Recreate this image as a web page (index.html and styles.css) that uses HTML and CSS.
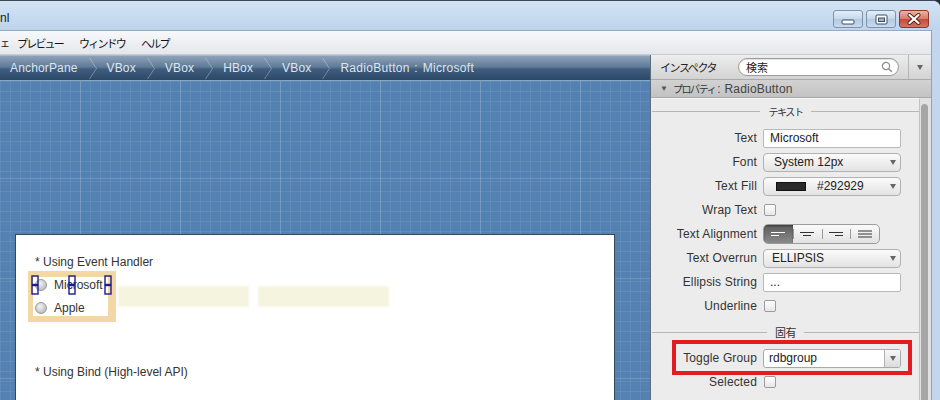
FILE: index.html
```html
<!DOCTYPE html>
<html lang="ja">
<head>
<meta charset="utf-8">
<title>Scene Builder</title>
<link rel="stylesheet" href="styles.css">
</head>
<body>
<div class="window">
  <div class="titlebar">
    <span class="title">nl</span>
    <div class="winbtns">
      <div class="wb">
        <svg width="14" height="6" viewBox="0 0 14 6"><rect x="1" y="1" width="12" height="4" rx="1" fill="#fff" stroke="#3c4c63"/></svg>
      </div>
      <div class="wb">
        <svg width="13" height="11" viewBox="0 0 13 11"><rect x="1" y="1" width="11" height="9" rx="1" fill="#fff" stroke="#3c4c63"/><rect x="3.5" y="4" width="6" height="3.5" fill="#9fb3cb" stroke="#3c4c63"/></svg>
      </div>
      <div class="wb close">
        <svg width="14" height="12" viewBox="0 0 14 12"><path d="M2.5 2 L11.5 10 M11.5 2 L2.5 10" stroke="#5a2018" stroke-width="4" stroke-linecap="round"/><path d="M2.5 2 L11.5 10 M11.5 2 L2.5 10" stroke="#fff" stroke-width="2.2" stroke-linecap="round"/></svg>
      </div>
    </div>
  </div>

  <div class="frame">
    <div class="menubar">
      <span class="menu jp frag">ェ</span>
      <span class="menu jp">プレビュー</span>
      <span class="menu jp">ウィンドウ</span>
      <span class="menu jp">ヘルプ</span>
    </div>

    <div class="main">
      <div class="left">
        <div class="crumbs">
          <span class="crumb">AnchorPane</span>
          <svg class="chev" width="8" height="25" viewBox="0 0 8 25"><polyline points="0.5,2 7.5,12.5 0.5,23" fill="none" stroke="rgba(255,255,255,0.3)"/></svg>
          <span class="crumb">VBox</span>
          <svg class="chev" width="8" height="25" viewBox="0 0 8 25"><polyline points="0.5,2 7.5,12.5 0.5,23" fill="none" stroke="rgba(255,255,255,0.3)"/></svg>
          <span class="crumb">VBox</span>
          <svg class="chev" width="8" height="25" viewBox="0 0 8 25"><polyline points="0.5,2 7.5,12.5 0.5,23" fill="none" stroke="rgba(255,255,255,0.3)"/></svg>
          <span class="crumb">HBox</span>
          <svg class="chev" width="8" height="25" viewBox="0 0 8 25"><polyline points="0.5,2 7.5,12.5 0.5,23" fill="none" stroke="rgba(255,255,255,0.3)"/></svg>
          <span class="crumb">VBox</span>
          <svg class="chev" width="8" height="25" viewBox="0 0 8 25"><polyline points="0.5,2 7.5,12.5 0.5,23" fill="none" stroke="rgba(255,255,255,0.3)"/></svg>
          <span class="crumb last">RadioButton : Microsoft</span>
        </div>
        <div class="canvas">
          <div class="doc">
            <div class="doctext first">* Using Event Handler</div>
            <div class="hbox">
              <div class="selbox">
                <div class="vbox">
                  <div class="radio"><span class="dot"></span><span>Microsoft</span></div>
                  <div class="radio"><span class="dot"></span><span>Apple</span></div>
                </div>
                <svg class="handle h1" width="8" height="20" viewBox="0 0 8 20"><rect x="1" y="1" width="6" height="8.5" fill="none" stroke="#1c1c8e" stroke-width="1.4"/><rect x="1" y="10.5" width="6" height="8.5" fill="none" stroke="#1c1c8e" stroke-width="1.4"/></svg>
                <svg class="handle h2" width="8" height="20" viewBox="0 0 8 20"><rect x="1" y="1" width="6" height="8.5" fill="none" stroke="#1c1c8e" stroke-width="1.4"/><rect x="1" y="10.5" width="6" height="8.5" fill="none" stroke="#1c1c8e" stroke-width="1.4"/></svg>
                <svg class="handle h3" width="8" height="20" viewBox="0 0 8 20"><rect x="1" y="1" width="6" height="8.5" fill="none" stroke="#1c1c8e" stroke-width="1.4"/><rect x="1" y="10.5" width="6" height="8.5" fill="none" stroke="#1c1c8e" stroke-width="1.4"/></svg>
              </div>
              <div class="ybox"></div>
              <div class="ybox second"></div>
            </div>
            <div class="doctext">* Using Bind (High-level API)</div>
          </div>
        </div>
      </div>

      <div class="inspector">
        <div class="ihead">
          <span class="ititle jp">インスペクタ</span>
          <div class="search">
            <span class="jp stext">検索</span>
            <svg width="12" height="12" viewBox="0 0 12 12"><circle cx="5" cy="5" r="3.6" fill="none" stroke="#8a8a8a" stroke-width="1.2"/><line x1="7.7" y1="7.7" x2="10.8" y2="10.8" stroke="#8a8a8a" stroke-width="1.5"/></svg>
          </div>
          <div class="imenu"><i class="tri"></i></div>
        </div>
        <div class="iprops"><span class="small-tri">▼</span><span class="jp ptitle">プロパティ</span><span class="psub"> : RadioButton</span></div>
        <div class="sheetwrap">
          <div class="sheet">
            <div class="sec sec1"><span class="jp sectext">テキスト</span></div>
            <div class="row"><div class="lbl">Text</div><div class="field">Microsoft</div></div>
            <div class="row"><div class="lbl">Font</div><div class="sel"><span class="selval">System 12px</span><i class="tri"></i></div></div>
            <div class="row"><div class="lbl">Text Fill</div><div class="sel"><span class="swatch"></span><span class="fillval">#292929</span><i class="tri"></i></div></div>
            <div class="row"><div class="lbl">Wrap Text</div><span class="check"></span></div>
            <div class="row"><div class="lbl">Text Alignment</div>
              <div class="seg">
                <span class="sb on"><svg width="16" height="8" viewBox="0 0 16 8"><line x1="1" y1="2.5" x2="15" y2="2.5" stroke="#fff" stroke-width="1.2"/><line x1="1" y1="5.5" x2="9" y2="5.5" stroke="#fff" stroke-width="1.2"/></svg></span>
                <span class="sb"><svg width="16" height="8" viewBox="0 0 16 8"><line x1="1" y1="2.5" x2="15" y2="2.5" stroke="#333" stroke-width="1.2"/><line x1="4" y1="5.5" x2="12" y2="5.5" stroke="#333" stroke-width="1.2"/></svg></span>
                <span class="sb"><svg width="16" height="8" viewBox="0 0 16 8"><line x1="1" y1="2.5" x2="15" y2="2.5" stroke="#333" stroke-width="1.2"/><line x1="7" y1="5.5" x2="15" y2="5.5" stroke="#333" stroke-width="1.2"/></svg></span>
                <span class="sb"><svg width="16" height="8" viewBox="0 0 16 8"><line x1="1" y1="1" x2="15" y2="1" stroke="#333" stroke-width="1.2"/><line x1="1" y1="4" x2="15" y2="4" stroke="#333" stroke-width="1.2"/><line x1="1" y1="7" x2="15" y2="7" stroke="#333" stroke-width="1.2"/></svg></span>
              </div>
            </div>
            <div class="row"><div class="lbl">Text Overrun</div><div class="sel"><span class="selval ov">ELLIPSIS</span><i class="tri"></i></div></div>
            <div class="row"><div class="lbl">Ellipsis String</div><div class="field">...</div></div>
            <div class="row"><div class="lbl">Underline</div><span class="check"></span></div>
            <div class="sec sec2"><span class="jp sectext kanji">固有</span></div>
            <div class="row rel"><div class="lbl">Toggle Group</div>
              <div class="combo"><span class="comboval">rdbgroup</span><span class="cbtn"><i class="tri"></i></span></div>
              <div class="redbox"></div>
            </div>
            <div class="row"><div class="lbl">Selected</div><span class="check"></span></div>
          </div>
          <div class="vscroll"><div class="thumb"></div></div>
        </div>
      </div>
    </div>
  </div>
</div>
</body>
</html>
```

FILE: styles.css
```css
* { box-sizing: border-box; margin: 0; padding: 0; }
html, body { width: 940px; height: 400px; overflow: hidden; }
body {
  background: #26313d;
  font-family: "Liberation Sans", "Noto Sans CJK JP", sans-serif;
  font-size: 12px;
  color: #333;
}
.jp { font-family: "Noto Sans CJK JP", sans-serif; }

.window {
  width: 940px;
  height: 400px;
  display: flex;
  flex-direction: column;
  background: #c2d7ed;
  border-top: 1px solid #3b4a5a;
  border-top-right-radius: 7px;
  overflow: hidden;
}

/* title bar */
.titlebar {
  height: 29px;
  flex: none;
  display: flex;
  justify-content: space-between;
  align-items: flex-start;
  background: linear-gradient(#d3e3f4, #bed4ec);
  padding-right: 11px;
}
.title { font-size: 12px; color: #1a1a1a; line-height: 14px; margin-top: 10px; }
.winbtns { display: flex; gap: 3px; margin-top: 9px; }
.wb {
  width: 30px; height: 18px;
  border: 1px solid #7c93ad;
  border-radius: 3px;
  background: linear-gradient(#e4eef9, #c6d7ea 50%, #b4c9e0 51%, #c8daee);
  display: flex; align-items: center; justify-content: center;
}
.wb:first-child svg { margin-top: 6px; }
.wb.close {
  border-color: #8a3a2c;
  background: linear-gradient(#eab3a5, #d97866 50%, #c44a36 51%, #d5745e);
}

/* frame content */
.frame {
  flex: 1;
  margin-right: 8px;
  display: flex;
  flex-direction: column;
  border-right: 1px solid #8ca3bc;
  min-height: 0;
}
.menubar {
  height: 25px;
  flex: none;
  display: flex;
  align-items: center;
  background: linear-gradient(#f7f8fa, #e4e7eb);
  border-top: 1px solid #95abc3;
  border-bottom: 1px solid #c9cdd3;
  overflow: hidden;
}
.menu { font-size: 11px; letter-spacing: -1.8px; color: #111; margin-right: 16px; white-space: nowrap; }
.menu.frag { margin-right: 7px; font-size: 10px; letter-spacing: 0; }

.main { flex: 1; display: flex; min-height: 0; }
.left { width: 650px; flex: none; display: flex; flex-direction: column; }

/* breadcrumbs */
.crumbs {
  height: 25px;
  flex: none;
  display: flex;
  align-items: center;
  padding-left: 10px;
  background: linear-gradient(#8ea3b9 0%, #5f7b98 45%, #3f5d7e 55%, #2c4867 100%);
  border-top: 1px solid #a9b9c9;
  color: #dde5ee;
  white-space: nowrap;
  overflow: hidden;
}
.crumb { font-size: 12px; letter-spacing: 0.15px; }
.crumb.last { letter-spacing: 0.3px; word-spacing: 1px; }
.chev { margin: 0 10px 0 11px; flex: none; }

/* canvas */
.canvas {
  flex: 1;
  min-height: 0;
  overflow: hidden;
  padding: 153px 0 0 15px;
  border-top: 1px solid #86a6c8;
  background-color: #5381b1;
  background-image:
    linear-gradient(90deg, rgba(255,255,255,0.14) 1px, transparent 1px),
    linear-gradient(rgba(255,255,255,0.14) 1px, transparent 1px),
    linear-gradient(90deg, rgba(255,255,255,0.08) 1px, transparent 1px),
    linear-gradient(rgba(255,255,255,0.08) 1px, transparent 1px);
  background-size: 100px 100px, 100px 100px, 10px 10px, 10px 10px;
  background-position: 80px 0, 0 97px, 0 0, 0 0;
}
.doc {
  width: 600px;
  height: 200px;
  background: #fff;
  border: 1px solid #34465a;
  border-bottom: none;
}
.doctext { font-size: 12px; line-height: 14px; color: #333; margin-left: 19px; margin-top: 43px; }
.doctext.first { margin-top: 20px; }
.hbox { display: flex; align-items: flex-start; margin: 2px 0 0 12px; }
.selbox {
  position: relative;
  background: #f4d7a6;
  padding: 6px 8px 6px 5px;
}
.vbox {
  width: 75px;
  height: 39px;
  background: #fff;
  overflow: hidden;
  padding-left: 2px;
}
.radio { display: flex; align-items: center; height: 16px; gap: 7px; white-space: nowrap; font-size: 12px; color: #333; }
.radio + .radio { margin-top: 7px; }
.dot {
  width: 12px; height: 12px; border-radius: 50%; flex: none;
  background: radial-gradient(circle at 40% 35%, #f4f4f4, #c9c9c9 60%, #a9a9a9);
  border: 1px solid #9a9a9a;
}
.handle { position: absolute; top: 4px; }
.h1 { left: 3px; }
.h2 { left: 40px; }
.h3 { left: 76px; }
.ybox {
  width: 129px; height: 19px;
  margin: 16px 0 0 3px;
  background: #f4f4df;
  border-radius: 2px;
  box-shadow: 0 0 0 2px rgba(246,246,232,0.6);
}
.ybox.second { margin-left: 11px; }

/* inspector */
.inspector {
  flex: 1;
  display: flex;
  flex-direction: column;
  border-left: 1px solid #5d6d7e;
  background: #e9e9e9;
  min-width: 0;
}
.ihead {
  height: 25px;
  flex: none;
  display: flex;
  align-items: center;
  padding-left: 9px;
  background: linear-gradient(#ededed, #d3d3d3);
  border-bottom: 1px solid #aaaaaa;
}
.ititle { width: 78px; font-size: 11px; letter-spacing: -1.4px; color: #222; white-space: nowrap; }
.search {
  width: 161px; height: 18px;
  background: #fff;
  border: 1px solid #9b9b9b;
  border-radius: 9px;
  display: flex; align-items: center; justify-content: space-between;
  padding: 0 5px 0 7px;
  box-shadow: inset 0 1px 1px rgba(0,0,0,0.12);
}
.stext { font-size: 11px; color: #222; }
.imenu {
  margin-left: 9px;
  align-self: stretch;
  flex: 1;
  border-left: 1px solid #b5b5b5;
  display: flex; align-items: center; justify-content: center;
}
.tri {
  display: inline-block;
  width: 0; height: 0;
  border-left: 3.5px solid transparent;
  border-right: 3.5px solid transparent;
  border-top: 5px solid #666;
}
.iprops {
  height: 18px;
  flex: none;
  display: flex;
  align-items: center;
  padding-left: 9px;
  background: linear-gradient(#d2d2d2, #c3c3c3);
  border-bottom: 1px solid #a9a9a9;
  color: #444;
  white-space: nowrap;
}
.small-tri { font-size: 8px; color: #555; margin-right: 5px; }
.ptitle { font-size: 10px; letter-spacing: -1.4px; color: #333; }
.psub { font-size: 12px; color: #444; margin-left: 2px; letter-spacing: 0.2px; }

.sheetwrap { flex: 1; display: flex; min-height: 0; }
.sheet {
  width: 269px;
  flex: none;
  background: #ececec;
  border-right: 1px solid #c2c2c2;
  border-top: 1px solid #f6f6f6;
}
.sec {
  height: 24px;
  display: flex;
  align-items: center;
  gap: 8px;
  padding-left: 1px;
}
.sec::before, .sec::after { content: ""; flex: 1; height: 1px; background: #b6b6b6; }
.sec1 { margin-bottom: 3px; }
.sec2 { height: 28px; }
.sectext { font-size: 10px; letter-spacing: -1.4px; color: #333; }
.sectext.kanji { font-size: 11px; letter-spacing: -0.5px; }

.row { height: 24px; display: flex; align-items: center; }
.row.rel { position: relative; }
.lbl { width: 106px; text-align: right; margin-right: 6px; color: #333; white-space: nowrap; font-size: 12px; letter-spacing: 0.15px; }
.field {
  width: 138px; height: 19px;
  background: #fff;
  border: 1px solid #b9b9b9;
  border-radius: 2px;
  padding-left: 6px;
  line-height: 17px;
  color: #222;
}
.sel {
  width: 138px; height: 19px;
  border: 1px solid #b2b2b2;
  border-radius: 4px;
  background: linear-gradient(#fbfbfb, #e3e3e3);
  display: flex; align-items: center;
  padding: 0 4px 0 10px;
  color: #222;
}
.sel .tri { margin-left: auto; }
.selval.ov { margin-left: -2px; }
.swatch { width: 30px; height: 9px; background: #292929; border: 1px solid #111; margin-left: 2px; flex: none; }
.fillval { margin-left: 11px; }
.check {
  width: 12px; height: 12px;
  margin-left: 1px;
  border: 1px solid #9c9c9c;
  border-radius: 2px;
  background: linear-gradient(#ffffff, #e6e6e6);
}
.seg {
  width: 117px; height: 20px;
  display: flex;
  border: 1px solid #9c9c9c;
  border-radius: 5px;
  overflow: hidden;
  background: linear-gradient(#fbfbfb, #e2e2e2);
}
.sb { flex: 1; display: flex; align-items: center; justify-content: center; position: relative; }
.sb + .sb::before {
  content: ""; position: absolute; left: 0; top: 4px; bottom: 4px; width: 1px; background: #9a9a9a;
}
.sb.on { background: linear-gradient(#5c5c5c, #8a8a8a); box-shadow: inset 0 1px 2px rgba(0,0,0,0.4); }
.combo {
  width: 138px; height: 19px;
  display: flex;
  background: #fff;
  border: 1px solid #a9a9a9;
  border-radius: 3px;
  overflow: hidden;
}
.comboval { flex: 1; padding-left: 5px; line-height: 17px; color: #222; }
.cbtn {
  width: 16px;
  border-left: 1px solid #b2b2b2;
  background: linear-gradient(#f8f8f8, #dcdcdc);
  display: flex; align-items: center; justify-content: center;
}
.redbox {
  position: absolute;
  left: 21px; top: -6px;
  width: 240px; height: 35px;
  border: 4px solid #e31b23;
}
.vscroll { flex: 1; background: #e2e2e2; position: relative; }
.thumb {
  position: absolute;
  left: 1px; top: 6px; bottom: 0;
  width: 7px;
  background: #a6a6a6;
  border-radius: 4px 4px 0 0;
}
```
